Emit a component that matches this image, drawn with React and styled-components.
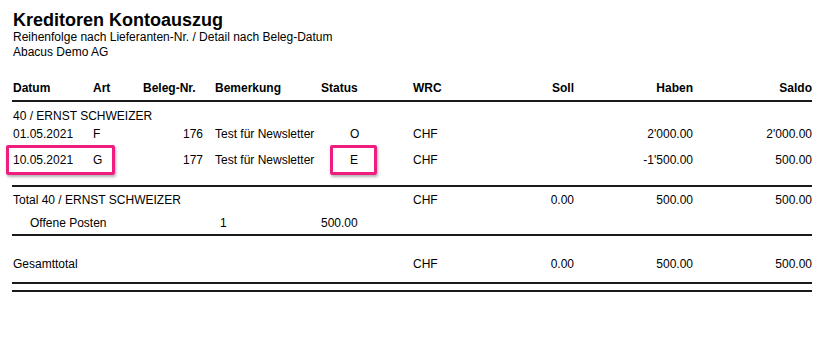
import React from "react";
import styled, { createGlobalStyle } from "styled-components";

const Global = createGlobalStyle`
  html, body { margin: 0; padding: 0; background: #fff; }
  body { font-family: "Liberation Sans", Arial, sans-serif; color: #000; }
`;

const Page = styled.div`
  width: 826px;
  height: 340px;
  padding: 10px 0 0 12px;
  box-sizing: border-box;
  font-size: 12px;
`;

const Title = styled.h1`
  margin: 0 0 0 1px;
  font-size: 18px;
  line-height: 20px;
  font-weight: 700;
`;

const Sub = styled.div`
  margin-left: 1px;
  line-height: 15px;
  font-size: 12px;
`;

const Report = styled.div`
  width: 800px;
  margin-top: 20px;
`;

const cols = "80px 50px 60px 118px 92px 61px 100px 119px 119px";

const Row = styled.div`
  position: relative;
  display: grid;
  grid-template-columns: ${cols};
  padding-left: 1px;
  height: ${(p) => p.$h || 18}px;
  margin-top: ${(p) => p.$mt || 0}px;
  align-items: center;
  font-weight: ${(p) => (p.$head ? 700 : 400)};
  white-space: nowrap;
`;

const Cell = styled.div`
  text-align: ${(p) => (p.$right ? "right" : "left")};
  padding-left: ${(p) => p.$pl || 0}px;
  grid-column: ${(p) => p.$span || "auto"};
`;

const Rule = styled.div`
  height: 2px;
  background: #1a1a1a;
  margin-top: ${(p) => p.$mt || 0}px;
`;

const Highlight = styled.div`
  position: absolute;
  top: -6px;
  height: 30px;
  box-sizing: border-box;
  border: 3px solid #ef1d7f;
  border-radius: 2px;
  box-shadow: 1px 2px 3px rgba(0, 0, 0, 0.3);
  left: ${(p) => p.$left}px;
  width: ${(p) => p.$w}px;
  pointer-events: none;
`;

const rows = [
  { d: "01.05.2021", a: "F", n: "176", b: "Test für Newsletter", s: "O", h: "2'000.00", sa: "2'000.00" },
  { d: "10.05.2021", a: "G", n: "177", b: "Test für Newsletter", s: "E", h: "-1'500.00", sa: "500.00", mark: true },
];

export default function App() {
  return (
    <Page>
      <Global />
      <Title>Kreditoren Kontoauszug</Title>
      <Sub>Reihenfolge nach Lieferanten-Nr. / Detail nach Beleg-Datum</Sub>
      <Sub>Abacus Demo AG</Sub>
      <Report>
        <Row $head $h={16}>
          <Cell>Datum</Cell>
          <Cell>Art</Cell>
          <Cell>Beleg-Nr.</Cell>
          <Cell $pl={12}>Bemerkung</Cell>
          <Cell>Status</Cell>
          <Cell>WRC</Cell>
          <Cell $right>Soll</Cell>
          <Cell $right>Haben</Cell>
          <Cell $right>Saldo</Cell>
        </Row>
        <Rule $mt={4} />
        <Row $mt={5}>
          <Cell $span="1 / 5">40 / ERNST SCHWEIZER</Cell>
        </Row>
        {rows.map((r, i) => (
          <Row key={i} $mt={i === 0 ? 0 : 8}>
            <Cell>{r.d}</Cell>
            <Cell>{r.a}</Cell>
            <Cell $right>{r.n}</Cell>
            <Cell $pl={12}>{r.b}</Cell>
            <Cell $pl={29}>{r.s}</Cell>
            <Cell>CHF</Cell>
            <Cell $right></Cell>
            <Cell $right>{r.h}</Cell>
            <Cell $right>{r.sa}</Cell>
            {r.mark && (
              <>
                <Highlight $left={-6} $w={109} />
                <Highlight $left={318} $w={47} />
              </>
            )}
          </Row>
        ))}
        <Rule $mt={16} />
        <Row $mt={4}>
          <Cell $span="1 / 5">Total 40 / ERNST SCHWEIZER</Cell>
          <Cell $span="6">CHF</Cell>
          <Cell $right>0.00</Cell>
          <Cell $right>500.00</Cell>
          <Cell $right>500.00</Cell>
        </Row>
        <Row $mt={5}>
          <Cell $span="1 / 4" $pl={17}>Offene Posten</Cell>
          <Cell $pl={17}>1</Cell>
          <Cell>500.00</Cell>
        </Row>
        <Rule $mt={2} />
        <Row $mt={19}>
          <Cell $span="1 / 5">Gesamttotal</Cell>
          <Cell $span="6">CHF</Cell>
          <Cell $right>0.00</Cell>
          <Cell $right>500.00</Cell>
          <Cell $right>500.00</Cell>
        </Row>
        <Rule $mt={9} />
        <Rule $mt={6} />
      </Report>
    </Page>
  );
}
